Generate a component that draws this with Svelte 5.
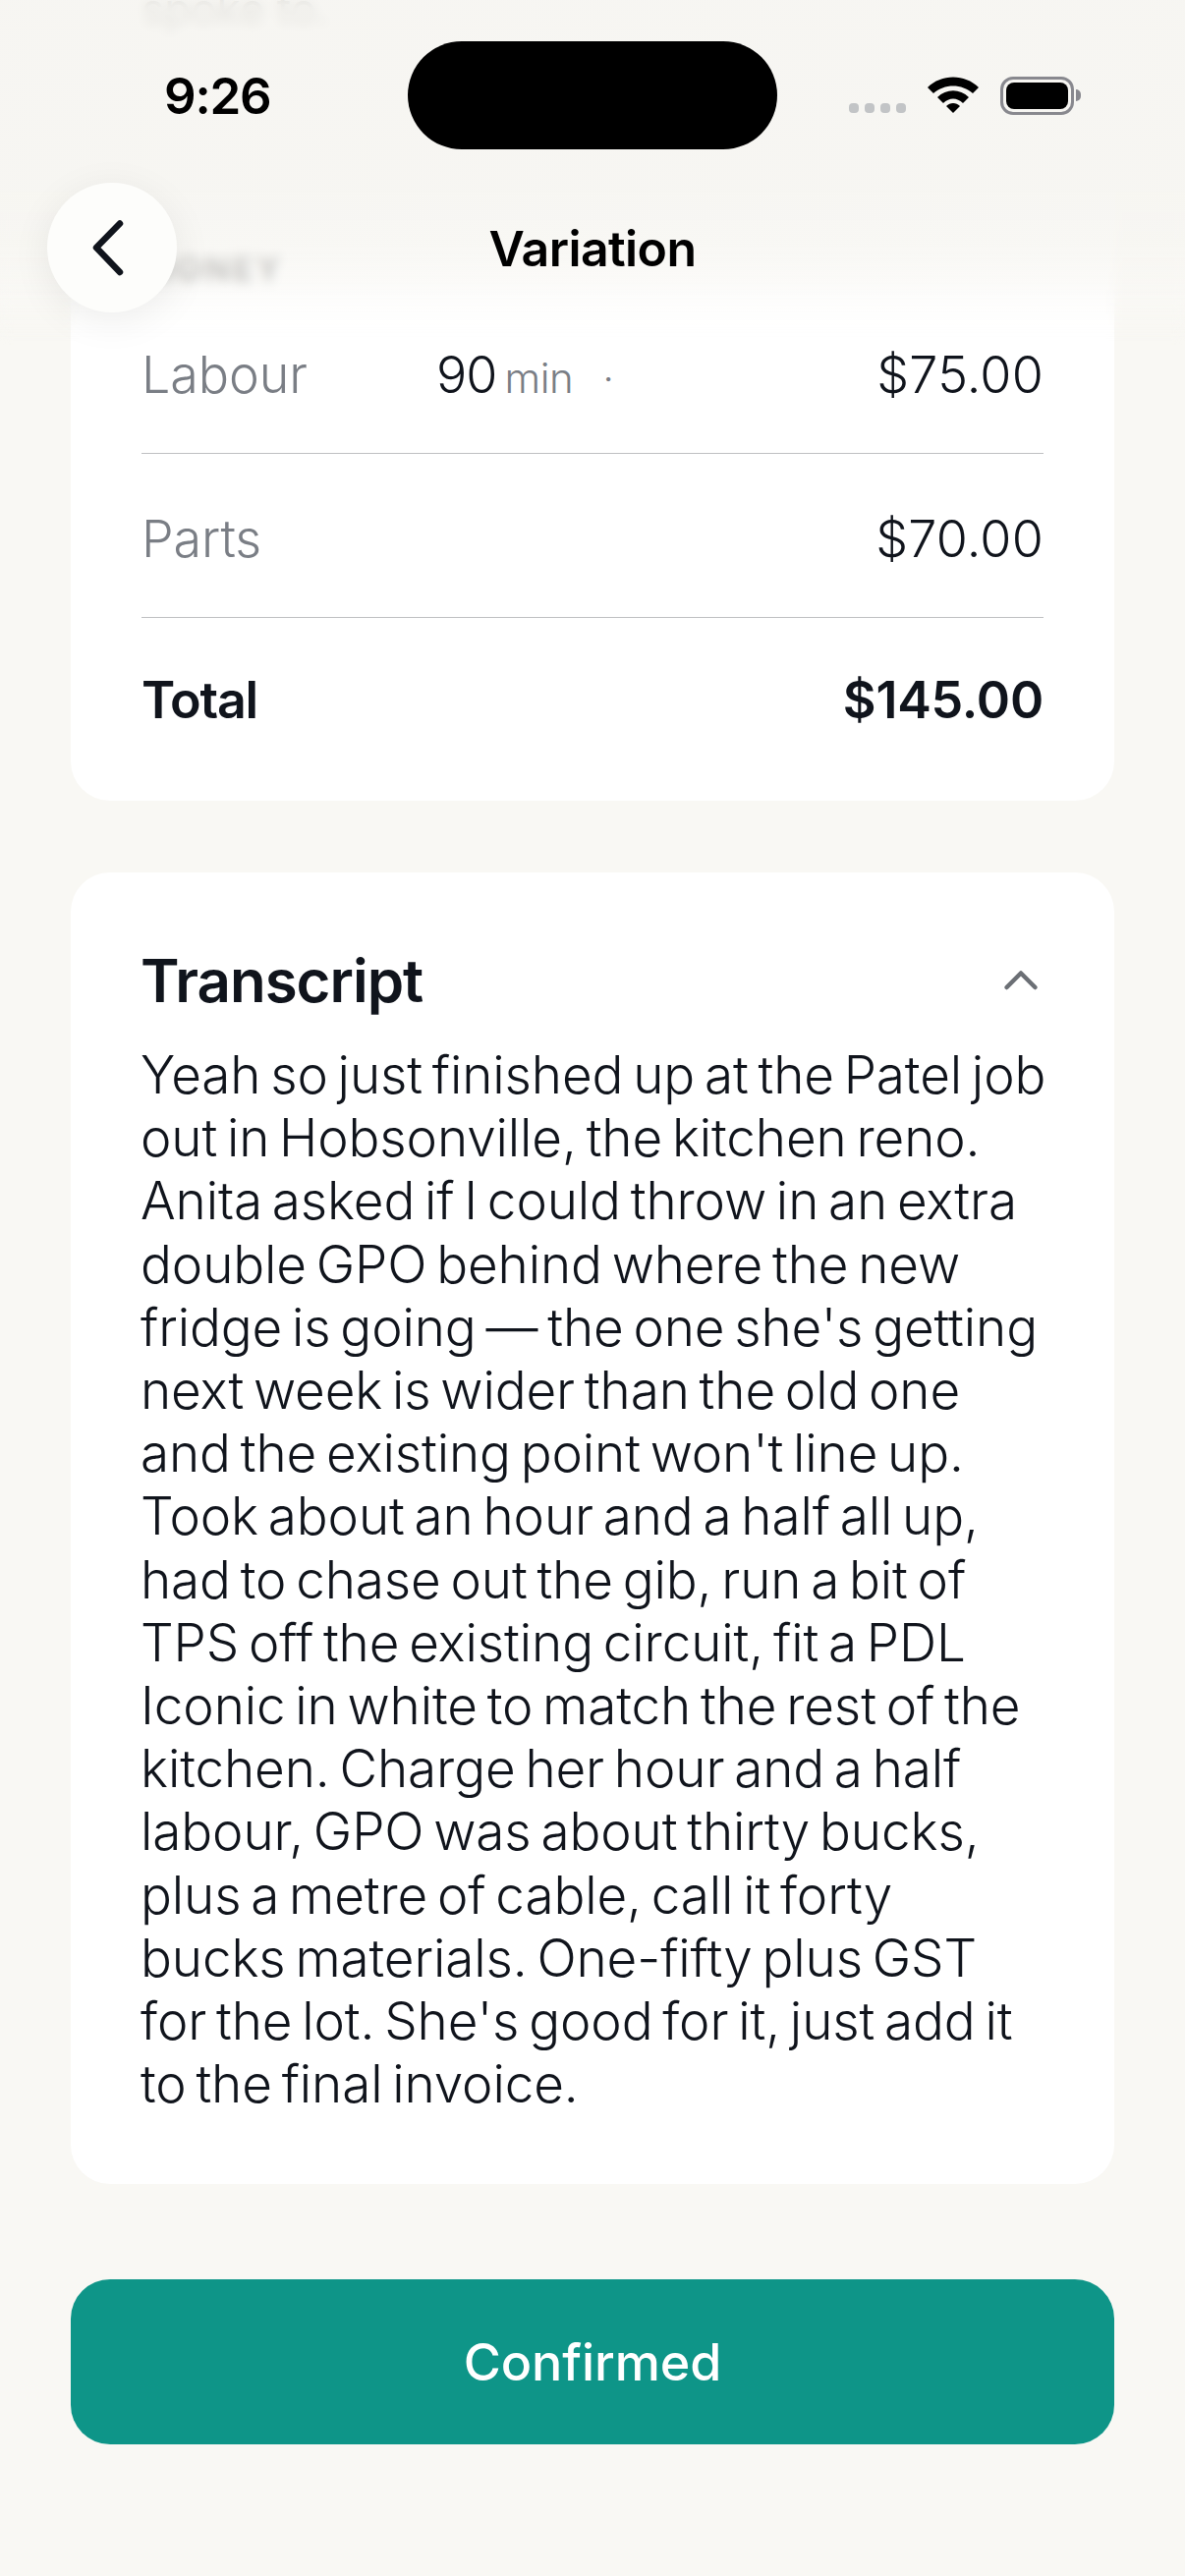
<script>
  const rows = [
    { label: 'Labour', amount: '$75.00', qty: '90', unit: 'min' },
    { label: 'Parts', amount: '$70.00' }
  ];

  const transcript = [
    'Yeah so just finished up at the Patel job',
    'out in Hobsonville, the kitchen reno.',
    'Anita asked if I could throw in an extra',
    'double GPO behind where the new',
    "fridge is going — the one she's getting",
    'next week is wider than the old one',
    "and the existing point won't line up.",
    'Took about an hour and a half all up,',
    'had to chase out the gib, run a bit of',
    'TPS off the existing circuit, fit a PDL',
    'Iconic in white to match the rest of the',
    'kitchen. Charge her hour and a half',
    'labour, GPO was about thirty bucks,',
    'plus a metre of cable, call it forty',
    'bucks materials. One-fifty plus GST',
    "for the lot. She's good for it, just add it",
    'to the final invoice.'
  ];
</script>

<div class="page">
  <div class="scroll">
    <section class="card peek">
      <p class="faint">spoke to.</p>
    </section>

    <section class="card money">
      <h3>MONEY</h3>
      {#each rows as row}
        <div class="row">
          <span class="label">{row.label}</span>
          {#if row.qty}
            <span class="qty">{row.qty}<small>{row.unit}</small><i>·</i></span>
          {/if}
          <span class="amount">{row.amount}</span>
        </div>
      {/each}
      <div class="row total">
        <span class="total-label">Total</span>
        <span>$145.00</span>
      </div>
    </section>

    <section class="card transcript">
      <header>
        <h2>Transcript</h2>
        <svg width="38" height="24" viewBox="0 0 38 24" fill="none" stroke="#6b6f75" stroke-width="4.5" stroke-linecap="round" stroke-linejoin="round">
          <path d="M4.5 20 L19 5.5 L33.5 20" />
        </svg>
      </header>
      <p>
        {#each transcript as line}
          <span>{line}</span>
        {/each}
      </p>
    </section>

    <button class="confirm">Confirmed</button>
  </div>

  <div class="blur"></div>

  <div class="topbar">
    <div class="status">
      <span class="time">9:26</span>
      <div class="island"></div>
      <div class="indicators">
        <div class="dots"><b></b><b></b><b></b><b></b></div>
        <svg class="wifi" width="52" height="38" viewBox="0 0 52 38">
          <path d="M0 11 C14 -3 38 -3 52 11 L46 17 C35 7 17 7 6 17 Z" />
          <path d="M10 21 C19 12 33 12 42 21 L36 27 C30 21 22 21 16 27 Z" />
          <path d="M19 30 C23 26 29 26 33 30 L26 37 Z" />
        </svg>
        <div class="battery"><div class="level"></div></div>
        <div class="nub"></div>
      </div>
    </div>
    <div class="nav">
      <button class="back" aria-label="Back">
        <svg width="44" height="64" viewBox="0 0 44 64" fill="none" stroke="#10141c" stroke-width="6.5" stroke-linecap="round" stroke-linejoin="round">
          <path d="M30 7.5 L6 32 L30 57" />
        </svg>
      </button>
      <h1>Variation</h1>
    </div>
  </div>
</div>

<style>
  :global(body) {
    margin: 0;
    background: #f9f8f4;
  }

  .page {
    position: relative;
    width: 1206px;
    height: 2622px;
    overflow: hidden;
    background: #f9f8f4;
    font-family: Inter, "Open Sans", sans-serif;
    color: #10141c;
  }

  .scroll {
    display: flex;
    flex-direction: column;
    padding: 0 72px;
    margin-top: -92px;
  }

  .card {
    background: #fff;
    border-radius: 40px;
    padding: 0 72px;
  }

  .peek {
    height: 200px;
    box-sizing: border-box;
    margin-bottom: 73px;
  }

  .faint {
    margin: 0;
    padding-top: 76px;
    font-size: 44px;
    line-height: 50px;
    color: #222;
  }

  .money {
    height: 634px;
    box-sizing: border-box;
    padding-top: 72px;
  }

  .money h3 {
    margin: 0 0 2px;
    font-size: 34px;
    line-height: 40px;
    font-weight: 700;
    letter-spacing: 3px;
    color: #555;
  }

  .row {
    display: flex;
    align-items: center;
    height: 167px;
    padding-top: 6px;
    border-bottom: 1px solid #bfc0c2;
    box-sizing: border-box;
    font-size: 52px;
    letter-spacing: 0.2px;
    font-weight: 350;
  }

  .label {
    width: 300px;
    color: #7a7e85;
    font-weight: 300;
    letter-spacing: -0.1px;
  }

  .qty {
    flex: 1;
    letter-spacing: -1px;
  }

  .qty small {
    margin-left: 8px;
    font-size: 42px;
    font-weight: 300;
    letter-spacing: -0.4px;
    color: #7a7e85;
  }

  .qty i {
    margin-left: 30px;
    font-style: normal;
    font-size: 40px;
    color: #7a7e85;
  }

  .amount {
    margin-left: auto;
  }

  .total {
    padding-top: 0;
    border-bottom: 0;
    justify-content: space-between;
    font-weight: 600;
    letter-spacing: -0.2px;
  }

  .total-label {
    letter-spacing: -1.2px;
  }

  .transcript {
    margin-top: 73px;
    padding-top: 78px;
    height: 1335px;
    box-sizing: border-box;
  }

  .transcript header {
    display: flex;
    align-items: center;
    justify-content: space-between;
    height: 64px;
    margin-bottom: 32px;
  }

  .transcript h2 {
    margin: 0 0 0 -1px;
    font-size: 60px;
    font-weight: 600;
    letter-spacing: -1px;
  }

  .transcript header svg {
    margin-right: 4px;
    margin-top: -2px;
  }

  .transcript p {
    margin: 0 0 0 -1px;
    font-size: 53px;
    line-height: 64.2px;
    font-weight: 350;
    letter-spacing: -0.1px;
    word-spacing: -5px;
  }

  .transcript p span {
    display: block;
    white-space: nowrap;
  }

  .confirm {
    display: block;
    width: 100%;
    height: 168px;
    margin-top: 97px;
    border: 0;
    border-radius: 40px;
    background: #0e9588;
    color: #fff;
    font-family: inherit;
    font-size: 52px;
    font-weight: 500;
    letter-spacing: -0.1px;
  }

  /* frosted strip under the status bar and nav */
  .blur {
    position: absolute;
    top: 0;
    left: 0;
    right: 0;
    height: 352px;
    backdrop-filter: blur(6px);
    background: linear-gradient(rgba(246, 245, 241, 0.92) 0%, rgba(246, 245, 241, 0.92) 55%, rgba(247, 246, 242, 0.8) 72%, rgba(250, 249, 246, 0.5) 87%, rgba(255, 255, 255, 0) 100%);
    mask-image: linear-gradient(#000 82%, transparent 100%);
  }

  .topbar {
    position: absolute;
    top: 0;
    left: 0;
    right: 0;
  }

  .status {
    position: relative;
    display: flex;
    align-items: center;
    justify-content: space-between;
    height: 152px;
    padding: 42px 106px 0 167px;
    box-sizing: border-box;
  }

  .time {
    font-size: 51px;
    font-weight: 600;
    letter-spacing: -1.2px;
    color: #000;
  }

  .island {
    position: absolute;
    left: 415px;
    top: 42px;
    width: 376px;
    height: 110px;
    border-radius: 55px;
    background: #000;
  }

  .indicators {
    display: flex;
    align-items: center;
  }

  .dots {
    display: flex;
    gap: 6px;
    margin-top: 26px;
    margin-right: 22px;
  }

  .dots b {
    width: 10px;
    height: 10px;
    border-radius: 4px;
    background: #c2c4c6;
  }

  .wifi {
    fill: #000;
    margin-right: 22px;
  }

  .battery {
    width: 75px;
    height: 39px;
    border: 3px solid #88888e;
    border-radius: 13px;
    padding: 3px;
    box-sizing: border-box;
  }

  .level {
    width: 100%;
    height: 100%;
    background: #000;
    border-radius: 8px;
  }

  .nub {
    width: 5px;
    height: 12px;
    margin-left: 2px;
    border-radius: 0 5px 5px 0;
    background: #88888e;
  }

  .nav {
    position: relative;
    display: flex;
    align-items: center;
    justify-content: center;
    height: 134px;
    margin-top: 34px;
  }

  .nav h1 {
    margin: 0;
    font-size: 50px;
    font-weight: 600;
    letter-spacing: -0.6px;
    color: #000;
  }

  .back {
    position: absolute;
    left: 48px;
    top: 0;
    width: 132px;
    height: 132px;
    display: flex;
    align-items: center;
    justify-content: center;
    border: 0;
    padding: 0;
    border-radius: 50%;
    background: #fdfdfb;
    box-shadow: 0 8px 40px rgba(0, 0, 0, 0.07);
  }
</style>
